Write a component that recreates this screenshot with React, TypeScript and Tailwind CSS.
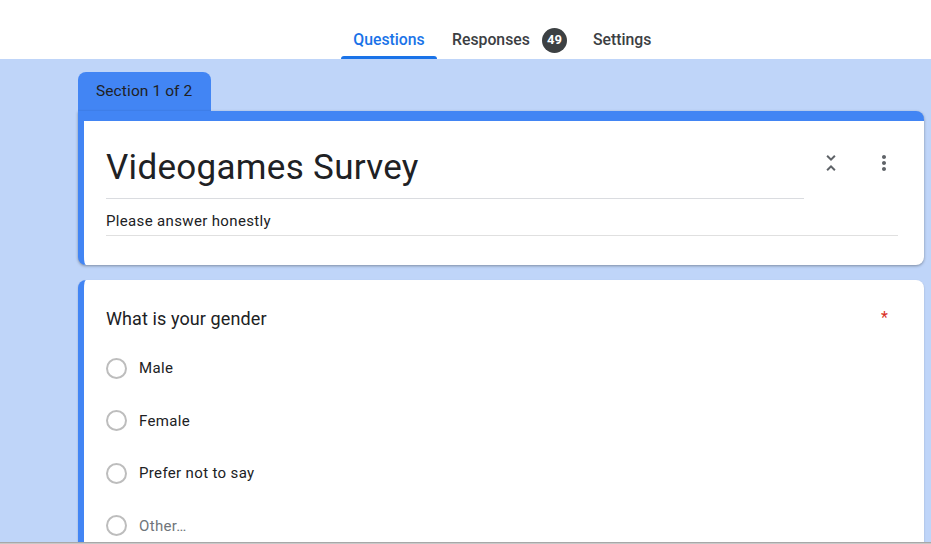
import React from "react";

const options = [
  { label: "Male", muted: false },
  { label: "Female", muted: false },
  { label: "Prefer not to say", muted: false },
  { label: "Other…", muted: true },
];

const Tabs = () => {
  return (
    <div className="h-[59px] bg-white flex items-end pl-[341px] font-['Roboto',sans-serif] text-[15.8px] font-medium">
      <div className="w-[96px] h-[59px] flex flex-col items-center">
        <span className="flex-1 flex items-center pt-[23px] text-[#1a73e8]">Questions</span>
        <div className="w-full h-[3px] bg-[#1a73e8] rounded-t-[3px]" />
      </div>
      <div className="h-[59px] ml-[15px] flex items-center pt-[21px] text-[#3c4043]">
        <span>Responses</span>
        <span className="ml-[12px] w-[25px] h-[25px] rounded-full bg-[#3c4043] text-white text-[13px] font-bold flex items-center justify-center">
          49
        </span>
        <span className="ml-[26px]">Settings</span>
      </div>
    </div>
  );
};

const Radio = ({ label, muted }: { label: string; muted: boolean }) => (
  <div className="h-[52.5px] flex items-center">
    <span className="w-[21px] h-[21px] rounded-full border-2 border-[#bdbdbd]" />
    <span className={"ml-[12px] text-[15px] tracking-[0.35px] " + (muted ? "text-[#70757a]" : "text-[#202124]")}>
      {label}
    </span>
  </div>
);

export default function App() {
  return (
    <div className="w-[931px] h-[544px] overflow-hidden flex flex-col bg-[#bfd5f9] font-['Roboto',sans-serif]">
      <Tabs />
      <div className="flex-1 overflow-hidden pl-[78px] pr-[7px] pt-[13px]">
        <div className="w-[133px] h-[39px] bg-[#4285f4] rounded-t-[8px] pl-[18px] flex items-center text-[15.5px] text-[#202124] tracking-[0.1px]">
          Section 1 of 2
        </div>
        {/* title card */}
        <div className="bg-white border-t-[10px] border-l-[6px] border-[#4285f4] rounded-tr-[8px] rounded-b-[8px] shadow-[0_1px_3px_rgba(0,0,0,0.35)] pl-[22px] pr-[26px] pb-[29px]">
          <div className="flex">
            <div className="w-[698px] pt-[27px] pb-[10px] border-b border-[#dadce0]">
              <div className="text-[35px] leading-[40px] text-[#202124] tracking-[0.3px]">Videogames Survey</div>
            </div>
            <div className="flex-1 flex items-start pt-[30px] pl-[15px] text-[#5f6368]">
              <svg width="24" height="24" viewBox="0 0 24 24" fill="currentColor">
                <path d="M7.41 18.59L8.83 20 12 16.83 15.17 20l1.41-1.41L12 14l-4.59 4.59zm9.18-13.18L15.17 4 12 7.17 8.83 4 7.41 5.41 12 10l4.59-4.59z" />
              </svg>
              <svg className="ml-[29px]" width="24" height="24" viewBox="0 0 24 24" fill="currentColor">
                <path d="M12 8c1.1 0 2-.9 2-2s-.9-2-2-2-2 .9-2 2 .9 2 2 2zm0 2c-1.1 0-2 .9-2 2s.9 2 2 2 2-.9 2-2-.9-2-2-2zm0 6c-1.1 0-2 .9-2 2s.9 2 2 2 2-.9 2-2-.9-2-2-2z" />
              </svg>
            </div>
          </div>
          <div className="pt-[12px] pb-[4px] border-b border-[#e0e0e0] text-[15px] leading-[20px] text-[#202124] tracking-[0.35px]">
            Please answer honestly
          </div>
        </div>
        {/* question card */}
        <div className="mt-[15px] bg-white border-l-[6px] border-[#4285f4] rounded-[8px] shadow-[0_1px_2px_rgba(0,0,0,0.2)] pl-[22px] pr-[36px] pt-[27px] pb-[20px]">
          <div className="flex justify-between">
            <span className="text-[18px] leading-[24px] text-[#202124] tracking-[0.1px]">What is your gender</span>
            <span className="text-[16px] leading-[20px] pt-[1px] text-[#d93025]">*</span>
          </div>
          <div className="mt-[11px]">
            {options.map((o) => (
              <Radio key={o.label} label={o.label} muted={o.muted} />
            ))}
          </div>
        </div>
      </div>
      <div className="h-[2px] bg-[#c8c8c8] border-t border-[#a8a8a8]" />
    </div>
  );
}
